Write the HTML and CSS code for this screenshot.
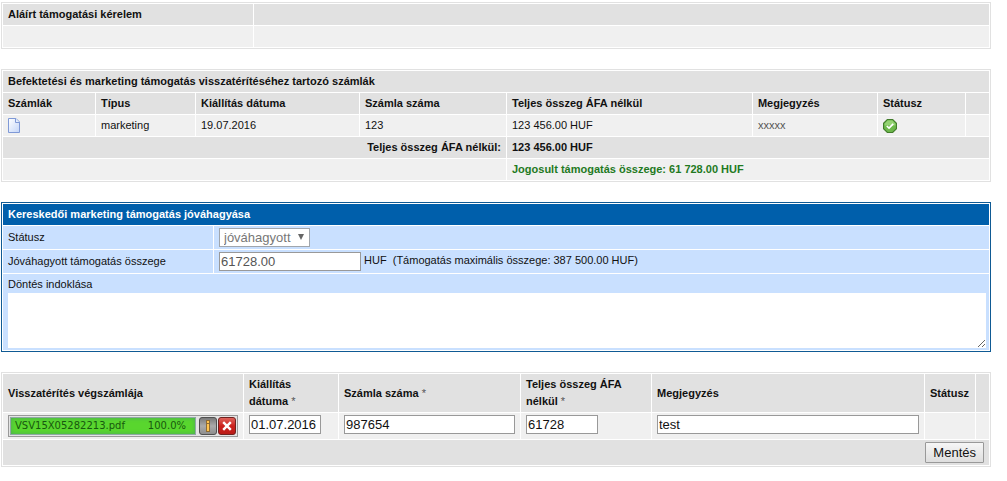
FILE: index.html
```html
<!DOCTYPE html>
<html lang="hu">
<head>
<meta charset="utf-8">
<title>Támogatási kérelem</title>
<link rel="stylesheet" href="styles.css">
</head>
<body>
<main class="page">
  <table class="grid">
    <colgroup><col class="w-request"><col></colgroup>
    <thead><tr><th>Aláírt támogatási kérelem</th><th></th></tr></thead>
    <tbody><tr><td>&nbsp;</td><td></td></tr></tbody>
  </table>

  <table class="grid">
    <colgroup><col class="w-file"><col class="w-type"><col class="w-issued"><col class="w-number"><col><col class="w-note"><col class="w-status"><col class="w-action"></colgroup>
    <thead>
      <tr><th colspan="8">Befektetési és marketing támogatás visszatérítéséhez tartozó számlák</th></tr>
      <tr><th>Számlák</th><th>Típus</th><th>Kiállítás dátuma</th><th>Számla száma</th><th>Teljes összeg ÁFA nélkül</th><th>Megjegyzés</th><th>Státusz</th><th></th></tr>
    </thead>
    <tbody>
      <tr>
        <td><a class="icon-link" href="#" aria-label="Számla megnyitása"><svg width="12" height="15" viewBox="0 0 12 15"><defs><linearGradient id="paper" x1="0" y1="0" x2="1" y2="1"><stop offset="0" stop-color="#fff"/><stop offset="1" stop-color="#c3d5f8"/></linearGradient></defs><path d="M.5.5H8L11.500 4V14.500H.5Z" fill="url(#paper)" stroke="#7f99d6"/><path d="M7.500.5V4.500H11.500" fill="#e4edff" stroke="#7f99d6"/></svg></a></td>
        <td>marketing</td><td>19.07.2016</td><td>123</td><td>123 456.00 HUF</td><td class="muted">xxxxx</td>
        <td><svg class="state" role="img" aria-label="jóváhagyott" width="14" height="14" viewBox="0 0 13 13"><path d="M4 .5H9L12.500 4V9L9 12.500H4L.5 9V4Z" fill="#6db84b" stroke="#427c2b"/><path d="M4.300 1.500H8.700L11.500 4.300V6H1.500V4.300Z" fill="#94d273"/><path d="M3.500 6.500L5.600 8.500L9.500 4.500" fill="none" stroke="#fff" stroke-width="1.500"/></svg></td>
        <td></td>
      </tr>
      <tr class="sum"><th class="right" colspan="4">Teljes összeg ÁFA nélkül:</th><th colspan="4">123 456.00 HUF</th></tr>
      <tr><td colspan="4"></td><td class="eligible" colspan="4">Jogosult támogatás összege: 61 728.00 HUF</td></tr>
    </tbody>
  </table>

  <table class="grid approval">
    <colgroup><col class="w-label"><col></colgroup>
    <thead><tr><th colspan="2">Kereskedői marketing támogatás jóváhagyása</th></tr></thead>
    <tbody>
      <tr>
        <td><label for="status">Státusz</label></td>
        <td><span class="select"><select id="status" disabled><option>jóváhagyott</option></select></span></td>
      </tr>
      <tr>
        <td><label for="amount">Jóváhagyott támogatás összege</label></td>
        <td><div class="amount"><input id="amount" class="field amount-field" type="text" value="61728.00"><span>HUF &nbsp;(Támogatás maximális összege: 387 500.00 HUF)</span></div></td>
      </tr>
      <tr><td class="reason" colspan="2"><label for="reason">Döntés indoklása</label><textarea id="reason"></textarea></td></tr>
    </tbody>
  </table>

  <table class="grid">
    <colgroup><col class="w-upload"><col class="w-date"><col class="w-invoice"><col class="w-total"><col><col class="w-state"><col class="w-end"></colgroup>
    <thead>
      <tr>
        <th>Visszatérítés végszámlája</th>
        <th><label for="date">Kiállítás dátuma <span class="required">*</span></label></th>
        <th><label for="invoice">Számla száma <span class="required">*</span></label></th>
        <th><label for="total">Teljes összeg ÁFA nélkül <span class="required">*</span></label></th>
        <th><label for="note">Megjegyzés</label></th><th>Státusz</th><th></th>
      </tr>
    </thead>
    <tbody>
      <tr class="entry">
        <td>
          <div class="upload">
            <div class="progress"><span>VSV15X05282213.pdf</span><span>100.0%</span></div>
            <button class="tool" type="button" aria-label="Információ"><svg width="18" height="18" viewBox="0 0 18 18"><defs><linearGradient id="steel" x2="0" y2="1"><stop offset="0" stop-color="#777"/><stop offset=".5" stop-color="#aaa"/><stop offset="1" stop-color="#8c8c8c"/></linearGradient></defs><rect x=".5" y=".5" width="17" height="17" rx="2.500" fill="url(#steel)" stroke="#505050"/><path d="M7 3H11V15H7Z" fill="#8d6b35"/><path d="M8 4H10V6H8ZM8 7H10V14H8Z" fill="#ffc44f"/></svg></button>
            <button class="tool" type="button" aria-label="Törlés"><svg width="18" height="18" viewBox="0 0 18 18"><defs><linearGradient id="danger" x2="0" y2="1"><stop offset="0" stop-color="#e0675f"/><stop offset=".5" stop-color="#cc211d"/><stop offset="1" stop-color="#b91a16"/></linearGradient></defs><rect x=".5" y=".5" width="17" height="17" rx="2.500" fill="url(#danger)" stroke="#6e2220"/><path d="M5.200 5.200L12.800 12.800M12.800 5.200L5.200 12.800" stroke="#fff" stroke-width="2.400"/></svg></button>
          </div>
        </td>
        <td><input id="date" class="field short" type="text" value="01.07.2016"></td>
        <td><input id="invoice" class="field" type="text" value="987654"></td>
        <td><input id="total" class="field short" type="text" value="61728"></td>
        <td><input id="note" class="field" type="text" value="test"></td>
        <td></td><td></td>
      </tr>
      <tr class="sum"><td class="right" colspan="7"><button class="save" type="button">Mentés</button></td></tr>
    </tbody>
  </table>
</main>
</body>
</html>
```
FILE: styles.css
```css
* { box-sizing: border-box; }
body {
  margin: 0;
  background: #fff;
  color: #111;
  font: 11px/17px "Liberation Sans", Arial, sans-serif;
}
.page {
  display: flex;
  flex-direction: column;
  gap: 20px;
  padding: 2px 16px 14px 1px;
}
.grid {
  width: 100%;
  table-layout: fixed;
  border: 1px solid #e1e1e1;
  border-collapse: separate;
  border-spacing: 1px;
}
.grid th, .grid td {
  height: 21px;
  padding: 2px 5px;
  text-align: left;
  vertical-align: middle;
}
.grid th { background: #e1e1e1; font-weight: bold; }
.grid td { background: #f0f0f0; }
.grid .sum td { background: #e1e1e1; }
.grid .right { text-align: right; }
.grid .eligible { color: #1f7a1f; font-weight: bold; }
.muted { color: #555; }
.required { color: #555; font-weight: normal; }

.w-request { width: 250px; }
.w-file { width: 92px; }
.w-type { width: 99px; }
.w-issued { width: 163px; }
.w-number { width: 146px; }
.w-note { width: 124px; }
.w-status { width: 87px; }
.w-action { width: 23px; }
.w-label { width: 210px; }
.w-upload { width: 240px; }
.w-date { width: 94px; }
.w-invoice { width: 181px; }
.w-total { width: 130px; }
.w-state { width: 50px; }
.w-end { width: 13px; }

svg { display: block; }
.icon-link { display: block; width: 12px; }

.approval { border-color: #0f5a94; }
.approval th { background: #005fab; color: #fff; }
.approval td { background: #c9e0ff; }
.select { display: block; position: relative; width: 91px; }
.select::after {
  content: "";
  position: absolute;
  top: 6px;
  right: 6px;
  border: 3px solid transparent;
  border-top: 6px solid #666;
  border-bottom: 0;
}
select {
  display: block;
  width: 100%;
  height: 19px;
  margin: 0;
  padding: 0 4px;
  border: 1px solid #a0a6ad;
  border-radius: 0;
  background: #fff;
  color: #777;
  font: 13px/17px "Liberation Sans", Arial, sans-serif;
  opacity: 1;
  appearance: none;
}
.field {
  display: block;
  width: 100%;
  height: 19px;
  margin: 0;
  padding: 0 1px;
  border: 1px solid #999;
  border-radius: 0;
  background: #fff;
  color: #111;
  font: 13px/17px "Liberation Sans", Arial, sans-serif;
}
.short { width: 72px; }
.amount { display: flex; gap: 3px; }
.amount-field { width: 142px; color: #555; }
.grid .reason { padding-right: 3px; }
label { display: block; }
textarea {
  display: block;
  width: 100%;
  height: 55px;
  margin: 0;
  padding: 2px;
  border: 0;
  background: #fff;
  font: 13px/17px "Liberation Sans", Arial, sans-serif;
  resize: vertical;
}

.grid .entry td { vertical-align: top; }
.upload {
  display: flex;
  align-items: center;
  gap: 1px;
  height: 22px;
  padding: 0 1px;
  border: 1px solid #999;
  background: #e4e4e4;
}
.progress {
  display: flex;
  flex: 1;
  align-items: center;
  justify-content: space-between;
  height: 18px;
  margin-right: 2px;
  padding: 0 9px 0 4px;
  border: 1px solid #8fa8a4;
  background: #59d62e;
  box-shadow: inset 0 0 4px #4ba75c;
  color: #17580f;
  font: 10px/16px "DejaVu Sans", Verdana, sans-serif;
}
.tool {
  width: 18px;
  height: 18px;
  padding: 0;
  border: 0;
  background: none;
}
.save {
  display: inline-block;
  height: 21px;
  padding: 0 7px;
  border: 1px solid #999;
  border-radius: 1px;
  background: linear-gradient(#f6f6f6, #dedede);
  color: #111;
  font: 13px/17px "Liberation Sans", Arial, sans-serif;
  vertical-align: top;
}
```
